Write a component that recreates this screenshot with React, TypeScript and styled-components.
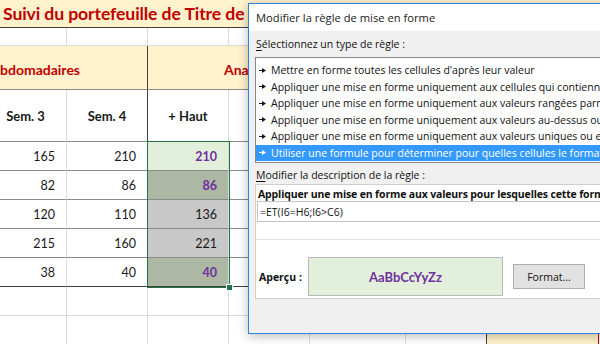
import React from "react";
import styled, { createGlobalStyle, css } from "styled-components";

const SHEET_FONT = `Lato, "Liberation Sans", sans-serif`;
const UI_FONT = `"Open Sans", "Noto Sans", sans-serif`;

const YELLOW = "#fff2cc";
const RED = "#c00000";
const PURPLE = "#7030a0";
const GRID = "#dadada";
const RULE = "#8a8a8a";
const DARK = "#3f3f3f";

const GlobalStyle = createGlobalStyle`
  html, body {
    margin: 0;
    padding: 0;
    background: #ffffff;
    overflow: hidden;
  }
`;

const Screen = styled.div`
  position: relative;
  width: 600px;
  height: 344px;
  overflow: hidden;
  background: #fff;
`;

/* ---------- spreadsheet ---------- */

const Sheet = styled.div`
  display: grid;
  grid-template-columns: 82px 81px 81px 81px 96px 81px 112px 60px;
  grid-template-rows: 28px 18px 44px 52px repeat(5, 29px) 29px 29px;
  margin-left: -15px;
  font-family: ${SHEET_FONT};
  color: #1a1a1a;
`;

type CellProps = {
  $span?: number;
  $bg?: string;
  $color?: string;
  $bold?: boolean;
  $align?: "left" | "center" | "right";
  $rb?: string;
  $bb?: string;
  $pl?: number;
  $size?: number;
};

const Cell = styled.div<CellProps>`
  box-sizing: border-box;
  display: flex;
  align-items: center;
  overflow: hidden;
  white-space: nowrap;
  grid-column: span ${(p) => p.$span ?? 1};
  background: ${(p) => p.$bg ?? "transparent"};
  color: ${(p) => p.$color ?? "#1a1a1a"};
  font-weight: ${(p) => (p.$bold ? 700 : 400)};
  font-size: ${(p) => p.$size ?? 12.5}px;
  justify-content: ${(p) =>
    p.$align === "right" ? "flex-end" : p.$align === "center" ? "center" : "flex-start"};
  padding-left: ${(p) => p.$pl ?? 0}px;
  padding-right: ${(p) => (p.$align === "right" ? 11 : 0)}px;
  ${(p) => p.$rb && css`border-right: 1px solid ${p.$rb};`}
  ${(p) => p.$bb && css`border-bottom: 1px solid ${p.$bb};`}
`;

const Title = styled(Cell)`
  font-size: 17.6px;
  letter-spacing: -0.1px;
  padding-bottom: 1px;
`;

const GroupHead = styled(Cell)`
  font-size: 14px;
  padding-top: 4px;
`;

const Selection = styled.div`
  position: absolute;
  left: 147px;
  top: 141px;
  width: 83px;
  height: 147px;
  box-sizing: border-box;
  border: 1px solid #217346;
  pointer-events: none;
`;

const Handle = styled.span`
  position: absolute;
  right: -3px;
  bottom: -3px;
  width: 5px;
  height: 5px;
  background: #217346;
  box-shadow: 0 0 0 1px #fff;
`;

/* ---------- dialog ---------- */

const Dialog = styled.div`
  position: absolute;
  left: 248px;
  top: 3px;
  width: 430px;
  height: 331px;
  box-sizing: border-box;
  border: 1px solid #2d84dc;
  background: #f0f0f0;
  box-shadow: 0 2px 10px rgba(0, 0, 0, 0.28);
  display: flex;
  flex-direction: column;
  font-family: ${UI_FONT};
  font-size: 10.5px;
  color: #111;
`;

const TitleBar = styled.div`
  height: 27px;
  flex: none;
  display: flex;
  align-items: center;
  padding-left: 7px;
  background: #fff;
  font-size: 11.2px;
  color: #1b1b1b;
`;

const Body = styled.div`
  flex: 1;
  display: flex;
  flex-direction: column;
  padding-left: 6px;
`;

const FieldLabel = styled.div<{ $top: number }>`
  height: 16px;
  line-height: 16px;
  margin-top: ${(p) => p.$top}px;
  padding-left: 1px;
  white-space: nowrap;

  u {
    text-decoration-thickness: 1px;
    text-underline-offset: 2px;
  }
`;

const RuleList = styled.ul`
  list-style: none;
  margin: 5px 0 0;
  padding: 4px 0 4px;
  height: 106px;
  box-sizing: border-box;
  background: #fff;
  border: 1px solid #828790;
`;

const RuleItem = styled.li<{ $selected?: boolean }>`
  display: flex;
  align-items: center;
  gap: 5px;
  height: 16.5px;
  padding-left: 3px;
  white-space: nowrap;
  overflow: hidden;
  background: ${(p) => (p.$selected ? "#3399ff" : "transparent")};
  color: ${(p) => (p.$selected ? "#fff" : "#111")};
`;

const ArrowIcon = styled.svg`
  flex: none;
  width: 7px;
  height: 5px;
  fill: currentColor;
`;

const Arrow = () => (
  <ArrowIcon viewBox="0 0 7 5" aria-hidden>
    <polygon points="0,2 3,2 3,0 7,2.5 3,5 3,3 0,3" />
  </ArrowIcon>
);

const Panel = styled.div`
  margin-top: 1px;
  height: 115px;
  box-sizing: border-box;
  background: #fff;
  border: 1px solid #cfcfcf;
  display: flex;
  flex-direction: column;
`;

const PanelHeading = styled.div`
  height: 14px;
  line-height: 14px;
  padding: 2px 0 0 2px;
  font-weight: 700;
  letter-spacing: -0.15px;
  white-space: nowrap;
  overflow: hidden;
`;

const FormulaBox = styled.div`
  height: 21px;
  box-sizing: border-box;
  margin-left: 1px;
  display: flex;
  align-items: center;
  padding-left: 2px;
  border: 1px solid #c4c4c4;
  border-right: none;
`;

const Separator = styled.div`
  margin-top: 17px;
  height: 1px;
  background: #e2e2e2;
`;

const PreviewRow = styled.div`
  display: flex;
  align-items: center;
  padding: 17px 0 2px 3px;
`;

const PreviewLabel = styled.span`
  width: 49px;
  font-weight: 700;
`;

const PreviewBox = styled.div`
  width: 195px;
  height: 39px;
  box-sizing: border-box;
  display: flex;
  align-items: center;
  justify-content: center;
  background: #e2efda;
  border: 1px solid #b9b9b9;
  color: ${PURPLE};
  font-family: ${SHEET_FONT};
  font-weight: 700;
  font-size: 13px;
`;

const FormatButton = styled.button`
  margin-left: 10px;
  width: 72px;
  height: 25px;
  box-sizing: border-box;
  padding: 0;
  background: #e1e1e1;
  border: 1px solid #adadad;
  font-family: ${UI_FONT};
  font-size: 10.5px;
  color: #111;
`;

/* ---------- data ---------- */

type DataRow = { a: number; b: number; c: number; bg: string; purple: boolean };

const rows: DataRow[] = [
  { a: 165, b: 210, c: 210, bg: "#e2efda", purple: true },
  { a: 82, b: 86, c: 86, bg: "#acb8a3", purple: true },
  { a: 120, b: 110, c: 136, bg: "#c8c8c8", purple: false },
  { a: 215, b: 160, c: 221, bg: "#c8c8c8", purple: false },
  { a: 38, b: 40, c: 40, bg: "#acb8a3", purple: true },
];

const rules = [
  "Mettre en forme toutes les cellules d'après leur valeur",
  "Appliquer une mise en forme uniquement aux cellules qui contiennent",
  "Appliquer une mise en forme uniquement aux valeurs rangées parmi les premières ou les dernières valeurs",
  "Appliquer une mise en forme uniquement aux valeurs au-dessus ou en dessous de la moyenne",
  "Appliquer une mise en forme uniquement aux valeurs uniques ou en double",
  "Utiliser une formule pour déterminer pour quelles cellules le format sera appliqué",
];

const EmptyRow = ({ last }: { last?: boolean }) => (
  <>
    <Cell $rb={GRID} $bb={GRID} />
    <Cell $rb={GRID} $bb={GRID} />
    <Cell $rb={GRID} $bb={GRID} />
    <Cell $rb={GRID} $bb={GRID} />
    <Cell $rb={GRID} $bb={GRID} />
    <Cell $rb={last ? DARK : GRID} $bb={GRID} />
    <Cell $rb={last ? RED : GRID} $bb={GRID} $bg={last ? YELLOW : undefined} />
    <Cell $bb={GRID} />
  </>
);

export default function App() {
  return (
    <Screen>
      <GlobalStyle />
      <Sheet>
        <Title $span={8} $bg={YELLOW} $color={RED} $bold $pl={18} $bb={DARK}>
          Suivi du portefeuille de Titre de
        </Title>

        <Cell $rb={GRID} $bb={GRID} />
        <Cell $rb={GRID} $bb={GRID} />
        <Cell $rb={GRID} $bb={GRID} />
        <Cell $rb={GRID} $bb={GRID} />
        <Cell $span={4} $bb={GRID} />

        <GroupHead $span={2} $bg={YELLOW} $color={RED} $bold $pl={15} $rb={DARK} $bb={RULE}>
          bdomadaires
        </GroupHead>
        <GroupHead $span={6} $bg={YELLOW} $color={RED} $bold $pl={76} $bb={RULE}>
          Analyse
        </GroupHead>

        <Cell $bold $align="center" $rb={GRID} $bb={RULE} $size={13}>
          Sem. 3
        </Cell>
        <Cell $bold $align="center" $rb={DARK} $bb={RULE} $size={13}>
          Sem. 4
        </Cell>
        <Cell $bold $align="center" $rb={GRID} $bb={RULE} $size={13}>
          + Haut
        </Cell>
        <Cell $span={5} $bb={RULE} />

        {rows.map((r, i) => {
          const bottom = i === rows.length - 1 ? DARK : RULE;
          return (
            <React.Fragment key={i}>
              <Cell $align="right" $rb={GRID} $bb={bottom}>
                {r.a}
              </Cell>
              <Cell $align="right" $rb={DARK} $bb={bottom}>
                {r.b}
              </Cell>
              <Cell
                $align="right"
                $bg={r.bg}
                $color={r.purple ? PURPLE : "#1a1a1a"}
                $bold={r.purple}
                $rb={GRID}
                $bb={bottom}
              >
                {r.c}
              </Cell>
              <Cell $span={5} $bb={bottom} />
            </React.Fragment>
          );
        })}

        <EmptyRow />
        <EmptyRow last />
      </Sheet>

      <Selection>
        <Handle />
      </Selection>

      <Dialog>
        <TitleBar>Modifier la règle de mise en forme</TitleBar>
        <Body>
          <FieldLabel $top={5}>
            <u>S</u>électionnez un type de règle :
          </FieldLabel>
          <RuleList>
            {rules.map((rule, i) => (
              <RuleItem key={i} $selected={i === rules.length - 1}>
                <Arrow />
                <span>{rule}</span>
              </RuleItem>
            ))}
          </RuleList>
          <FieldLabel $top={4}>
            <u>M</u>odifier la description de la règle :
          </FieldLabel>
          <Panel>
            <PanelHeading>
              Appliquer une mise en forme aux valeurs pour lesquelles cette formule est vraie :
            </PanelHeading>
            <FormulaBox>=ET(I6=H6;I6&gt;C6)</FormulaBox>
            <Separator />
            <PreviewRow>
              <PreviewLabel>Aperçu :</PreviewLabel>
              <PreviewBox>AaBbCcYyZz</PreviewBox>
              <FormatButton>Format...</FormatButton>
            </PreviewRow>
          </Panel>
        </Body>
      </Dialog>
    </Screen>
  );
}
